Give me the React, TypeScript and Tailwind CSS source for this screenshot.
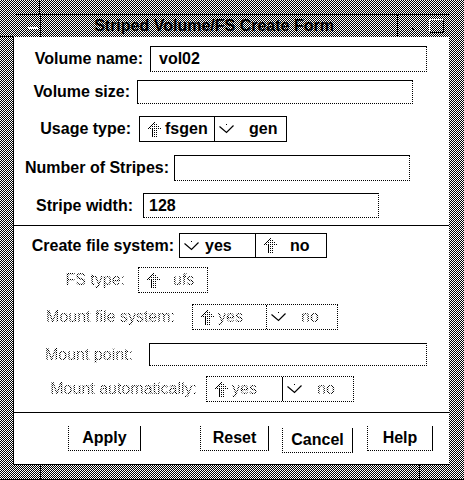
import React, { useId } from "react";

// checkerboard stipple used by the window frame and title bar
const FRAME =
  "bg-white bg-[image:repeating-conic-gradient(#000_0_25%,#0000_0_50%)] bg-[length:2px_2px]";
// 50% stipple for insensitive (greyed out) text
const GREY =
  "font-normal bg-[image:repeating-conic-gradient(#000_0_25%,#0000_0_50%)] bg-[length:2px_2px] bg-clip-text text-transparent";

const Up = () => {
  const id = "p" + useId().replace(/[^a-zA-Z0-9]/g, "");
  return (
    <svg width="13" height="15" viewBox="0 0 13 15" shapeRendering="crispEdges">
      <defs>
        <pattern id={id} width="2" height="2" patternUnits="userSpaceOnUse">
          <rect width="1" height="1" fill="#000" />
        </pattern>
      </defs>
      <polygon points="6.5,0 13,6.5 9,6.5 9,15 4,15 4,6.5 0,6.5" fill={`url(#${id})`} />
      <path d="M0.5 6.5 L6.5 0.5 M4.5 6.5 V14.5" stroke="#000" fill="none" />
    </svg>
  );
};

const Vee = () => (
  <svg width="15" height="10" viewBox="0 0 15 10">
    <path d="M0.5 2.5 L7.5 8.5 L14.5 1.5" stroke="#000" strokeWidth="1.2" fill="none" />
    <rect x="7" y="0" width="1" height="1" fill="#000" />
  </svg>
);

type RowProps = {
  mt: string;
  h: string;
  lw: string;
  label: string;
  disabled?: boolean;
  children: React.ReactNode;
};

const Row = ({ mt, h, lw, label, disabled, children }: RowProps) => (
  <div className={`flex items-center ${mt} ${h}`}>
    <div className={`${lw} shrink-0 text-right whitespace-nowrap`}>
      <span className={disabled ? GREY : "font-bold"}>{label}</span>
    </div>
    {children}
  </div>
);

const Field = ({ w, value, pl = "pl-[8px]" }: { w: string; value?: string; pl?: string }) => (
  <div
    className={`${w} h-full border border-black [border-right-style:dotted] [border-bottom-style:dotted] flex items-center font-bold ${pl}`}
  >
    {value}
  </div>
);

type SegProps = {
  label: string;
  on: boolean;
  second?: boolean;
  disabled?: boolean;
  className?: string;
};

const Seg = ({ label, on, second, disabled, className = "" }: SegProps) => (
  <div className={`flex items-center h-full ${className}`}>
    <div className={`${second ? "w-[34px]" : "w-[25px]"} shrink-0 flex items-center ${on ? "pl-[8px]" : "pl-[4px]"}`}>
      {on ? <Up /> : <Vee />}
    </div>
    <span className={disabled ? GREY : "font-bold"}>{label}</span>
  </div>
);

const Btn = ({ className, children }: { className: string; children: React.ReactNode }) => (
  <div
    className={`h-[25px] flex items-center justify-center font-bold border-l border-r border-b border-black [border-left-style:dotted] [border-bottom-style:dotted] ${className}`}
  >
    {children}
  </div>
);

export default function App() {
  return (
    <div
      className={`relative w-[464px] h-[480px] flex flex-col pt-[14px] pl-[13px] pr-[15px] pb-[14px] border-b border-black text-black text-[16px] leading-[18px] font-[family-name:'Liberation_Sans',Arial,sans-serif] ${FRAME}`}
    >
      {/* resize handle marks */}
      <div className="absolute left-[39px] top-0 w-px h-[14px] bg-black" />
      <div className="absolute left-0 top-[36px] w-[13px] h-px bg-black" />
      <div className="absolute left-[40px] bottom-0 w-px h-[15px] bg-black" />
      <div className="absolute left-[419px] bottom-0 w-px h-[15px] bg-black" />

      {/* title bar */}
      <div className="ml-[2px] h-[23px] flex border-t border-black shrink-0">
        <div className="w-[26px] border-r border-black flex items-center pl-[13px] pt-[3px]">
          <div className="w-[10px] h-[2px] border-t border-white border-b border-black" />
        </div>
        <div className="flex-1 flex items-center justify-center pr-[10px] font-bold">
          Striped Volume/FS Create Form
        </div>
        <div className="w-[26px] border-l border-black flex items-center justify-center">
          <div className="w-[2px] h-[2px] bg-black mt-[5px] ml-[4px]" />
        </div>
        <div className="w-[26px] flex items-center justify-center">
          <div className="w-[15px] h-[14px] border-l border-t border-white border-r border-b border-r-black border-b-black" />
        </div>
      </div>

      {/* form */}
      <div className="flex-1 bg-white border-l border-b border-black flex flex-col">
        <Row mt="mt-[9px]" h="h-[26px]" lw="w-[136px] pr-[7px]" label="Volume name:">
          <Field w="w-[277px]" value="vol02" />
        </Row>
        <Row mt="mt-[8px]" h="h-[24px]" lw="w-[123px] pr-[7px]" label="Volume size:">
          <Field w="w-[276px]" />
        </Row>
        <Row mt="mt-[12px]" h="h-[26px]" lw="w-[125px] pr-[8px]" label="Usage type:">
          <div className="w-[148px] h-full flex border border-black">
            <Seg className="w-[75px] border-r border-black" label="fsgen" on />
            <Seg className="flex-1" label="gen" on={false} second />
          </div>
        </Row>
        <Row mt="mt-[13px]" h="h-[26px]" lw="w-[160px] pr-[5px]" label="Number of Stripes:">
          <Field w="w-[236px]" />
        </Row>
        <Row mt="mt-[12px]" h="h-[25px]" lw="w-[129px] pr-[10px]" label="Stripe width:">
          <Field w="w-[236px]" value="128" pl="pl-[5px]" />
        </Row>

        <div className="mt-[7px] h-px bg-black" />

        <Row mt="mt-[7px]" h="h-[25px]" lw="w-[165px] pr-[5px]" label="Create file system:">
          <div className="w-[148px] h-full flex border border-black">
            <Seg className="w-[76px] border-r border-black" label="yes" on={false} />
            <Seg className="flex-1" label="no" on second />
          </div>
        </Row>
        <Row mt="mt-[9px]" h="h-[26px]" lw="w-[124px] pr-[13px]" label="FS type:" disabled>
          <div className="w-[70px] h-full flex border border-dotted border-black">
            <Seg className="flex-1" label="ufs" on second disabled />
          </div>
        </Row>
        <Row mt="mt-[11px]" h="h-[26px]" lw="w-[178px] pr-[17px]" label="Mount file system:" disabled>
          <div className="w-[146px] h-full flex border border-dotted border-black">
            <Seg className="w-[74px] border-r border-dotted border-black" label="yes" on disabled />
            <Seg className="flex-1" label="no" on={false} second disabled />
          </div>
        </Row>
        <Row mt="mt-[13px]" h="h-[23px]" lw="w-[135px] pr-[16px]" label="Mount point:" disabled>
          <Field w="w-[278px]" />
        </Row>
        <Row mt="mt-[10px]" h="h-[26px]" lw="w-[192px] pr-[9px]" label="Mount automatically:" disabled>
          <div className="w-[148px] h-full flex border border-dotted border-black">
            <Seg className="w-[76px] border-r border-black" label="yes" on disabled />
            <Seg className="flex-1" label="no" on={false} second disabled />
          </div>
        </Row>

        <div className="mt-[10px] h-px bg-black" />

        <div className="mt-[13px] flex items-start">
          <Btn className="ml-[54px] w-[73px]">Apply</Btn>
          <Btn className="ml-[59px] w-[69px]">Reset</Btn>
          <Btn className="ml-[13px] w-[71px] mt-[2px]">Cancel</Btn>
          <Btn className="ml-[14px] w-[66px]">Help</Btn>
        </div>
      </div>
    </div>
  );
}
